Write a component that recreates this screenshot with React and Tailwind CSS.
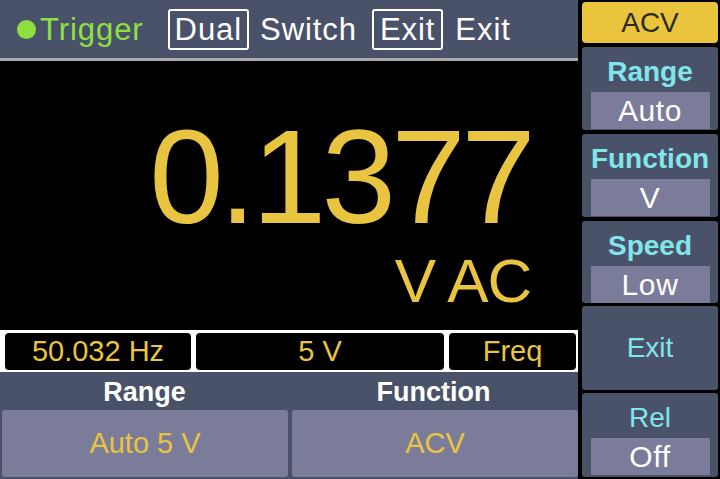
import React from 'react';

const font = { fontFamily: '"Liberation Sans", Arial, sans-serif' };

const SidePanel = ({ label, value, bold = true, className = '' }) => (
  <div className={`flex flex-col items-center rounded-[3px] bg-[#4a5269] ${className}`}>
    <div
      className={`mt-[9px] h-[32px] text-[28px] leading-[32px] text-[#80e6ea] ${bold ? 'font-bold' : ''}`}
    >
      {label}
    </div>
    <div className="mt-[4px] flex h-[37px] w-[119px] items-center justify-center bg-[#7b7c99] text-[30px] leading-none tracking-[0.02em] text-white">
      {value}
    </div>
  </div>
);

const InfoBox = ({ children, className = '' }) => (
  <div
    className={`flex h-[37px] items-center justify-center rounded-[4px] bg-black text-[29px] leading-none text-[#e9c440] ${className}`}
  >
    {children}
  </div>
);

export default function App() {
  return (
    <div className="flex h-[479px] w-[720px] overflow-hidden bg-black" style={font}>
      {/* left side */}
      <div className="flex w-[578px] flex-col">
        <div className="flex h-[58px] items-center bg-[#4a5269] pl-[17px] text-[31px] leading-none tracking-[0.03em] text-white">
          <span className="mr-[4px] h-[19px] w-[19px] rounded-full bg-[#8ee03e]" />
          <span className="text-[#8ee03e]">Trigger</span>
          <span className="ml-[24px] flex h-[41px] items-center rounded-[3px] border-2 border-white px-[5px]">
            Dual
          </span>
          <span className="ml-[11px]">Switch</span>
          <span className="ml-[15px] flex h-[41px] items-center rounded-[3px] border-2 border-white px-[6px]">
            Exit
          </span>
          <span className="ml-[12px]">Exit</span>
        </div>
        <div className="h-[3px] bg-[#a9a9ab]" />

        <div className="flex h-[269px] flex-col items-end pr-[47px]">
          <div className="mt-[49px] h-[134px] text-[134px] leading-none tracking-[-0.035em] text-[#e9c440]">
            0.1377
          </div>
          <div className="mt-[6px] h-[63px] text-[62px] leading-none tracking-[-0.02em] text-[#e9c440]">
            V AC
          </div>
        </div>

        <div className="flex h-[42px] items-center gap-[5px] bg-white pl-[5px] pr-[2px]">
          <InfoBox className="w-[186px]">50.032 Hz</InfoBox>
          <InfoBox className="w-[248px]">5 V</InfoBox>
          <InfoBox className="w-[127px]">Freq</InfoBox>
        </div>

        <div className="flex flex-1 flex-col bg-[#4a5269]">
          <div className="flex h-[38px] items-center">
            <div className="flex-1 pt-[3px] text-center text-[27px] font-bold leading-none text-white">Range</div>
            <div className="flex-1 pt-[3px] text-center text-[27px] font-bold leading-none text-white">Function</div>
          </div>
          <div className="flex gap-[4px] pl-[2px]">
            <div className="flex h-[67px] flex-1 items-center justify-center rounded-[3px] bg-[#7b7c99] text-[29px] leading-none text-[#e9c440]">
              Auto 5 V
            </div>
            <div className="flex h-[67px] flex-1 items-center justify-center rounded-[3px] bg-[#7b7c99] text-[29px] leading-none text-[#e9c440]">
              ACV
            </div>
          </div>
        </div>
      </div>

      {/* right side */}
      <div className="ml-[4px] flex w-[136px] flex-col pt-[2px]">
        <div className="flex h-[41px] items-center justify-center rounded-[4px] bg-[#e9c43c] text-[28px] leading-none text-[#2b2a26]">
          ACV
        </div>
        <SidePanel className="mt-[4px] h-[83px]" label="Range" value="Auto" />
        <SidePanel className="mt-[4px] h-[83px]" label="Function" value="V" />
        <SidePanel className="mt-[4px] h-[82px]" label="Speed" value="Low" />
        <div className="mt-[3px] flex h-[84px] items-center justify-center rounded-[3px] bg-[#4a5269] text-[28px] leading-none text-[#80e6ea]">
          Exit
        </div>
        <SidePanel className="mt-[3px] h-[84px]" label="Rel" value="Off" bold={false} />
      </div>
    </div>
  );
}
